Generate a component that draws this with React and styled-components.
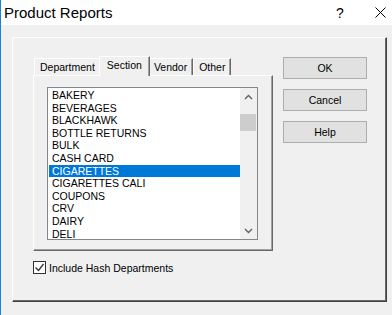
import React from "react";
import styled, { createGlobalStyle } from "styled-components";

const GlobalStyle = createGlobalStyle`
  body {
    margin: 0;
    background: #f0f0f0;
    font-family: "Liberation Sans", Arial, sans-serif;
  }
`;

const Window = styled.div`
  width: 392px;
  height: 315px;
  box-sizing: border-box;
  border-left: 1px solid #1883d7;
  background: #f0f0f0;
  display: flex;
  flex-direction: column;
  overflow: hidden;
`;

const TitleBar = styled.div`
  height: 25px;
  flex: none;
  background: #fff;
  display: flex;
  align-items: center;
  padding-left: 3px;
`;

const Title = styled.div`
  font-size: 15px;
  color: #000;
`;

const TitleButtons = styled.div`
  margin-left: auto;
  display: flex;
  align-items: center;
`;

const HelpGlyph = styled.span`
  font-size: 14px;
  color: #000;
  width: 39px;
  text-align: left;
`;

const CloseGlyph = styled.span`
  width: 17px;
  display: flex;
  justify-content: flex-start;
`;

const Body = styled.div`
  flex: 1;
  padding: 12px 5px 0 11px;
`;

const Panel = styled.div`
  height: 265px;
  box-sizing: border-box;
  border-top: 1px solid #fff;
  border-left: 1px solid #fff;
  border-right: 1px solid #404040;
  border-bottom: 1px solid #404040;
  box-shadow: inset -1px -1px 0 #696969;
  display: flex;
  padding: 18px 19px 0 20px;
`;

const LeftColumn = styled.div`
  width: 240px;
  display: flex;
  flex-direction: column;
`;

const TabStrip = styled.div`
  height: 19px;
  display: flex;
  align-items: flex-end;
  padding-left: 1px;
`;

const Tab = styled.div`
  position: relative;
  box-sizing: border-box;
  height: ${p => (p.$active ? "20px" : "17px")};
  margin: ${p => (p.$active ? "0 -2px -1px" : "0")};
  z-index: ${p => (p.$active ? 1 : 0)};
  padding: ${p => (p.$active ? "0 7px" : "0 5px")};
  background: #f0f0f0;
  border-top: 1px solid #fff;
  border-left: 1px solid #fff;
  border-right: 1px solid #696969;
  box-shadow: inset -1px 0 0 #a0a0a0;
  font-size: 10.5px;
  line-height: ${p => (p.$active ? "17px" : "16px")};
  color: #000;
  white-space: nowrap;
`;

const TabPanel = styled.div`
  height: 176px;
  box-sizing: border-box;
  border-top: 1px solid #fff;
  border-left: 1px solid #fff;
  border-right: 1px solid #696969;
  border-bottom: 1px solid #696969;
  box-shadow: inset -1px -1px 0 #a0a0a0;
  padding: 11px 0 0 13px;
`;

const ListBox = styled.div`
  width: 211px;
  height: 153px;
  box-sizing: border-box;
  border: 1px solid #828790;
  background: #fff;
  display: flex;
`;

const List = styled.div`
  flex: 1;
  padding: 1px 0 0 1px;
  overflow: hidden;
`;

const Item = styled.div`
  height: 12.6px;
  line-height: 12.6px;
  padding-left: 3px;
  font-size: 10.5px;
  color: ${p => (p.$selected ? "#fff" : "#000")};
  background: ${p => (p.$selected ? "#0078d7" : "transparent")};
  white-space: nowrap;
`;

const ScrollBar = styled.div`
  width: 17px;
  background: #f0f0f0;
  display: flex;
  flex-direction: column;
`;

const ScrollArrow = styled.div`
  height: 17px;
  display: flex;
  align-items: center;
  justify-content: center;
`;

const ScrollTrack = styled.div`
  flex: 1;
  padding: 9px 1px 0 0;
`;

const Thumb = styled.div`
  height: 17px;
  background: #cdcdcd;
`;

const CheckRow = styled.label`
  margin-top: 10px;
  display: flex;
  align-items: center;
  gap: 3px;
  font-size: 10.5px;
  color: #000;
`;

const CheckBox = styled.span`
  width: 13px;
  height: 13px;
  box-sizing: border-box;
  border: 1px solid #333;
  background: #fff;
  display: flex;
  align-items: center;
  justify-content: center;
`;

const ButtonColumn = styled.div`
  margin: 1px 0 0 10px;
  display: flex;
  flex-direction: column;
  gap: 10px;
`;

const Button = styled.div`
  width: 84px;
  height: 22px;
  box-sizing: border-box;
  border: 1px solid #adadad;
  background: #e1e1e1;
  font-size: 10.5px;
  color: #000;
  display: flex;
  align-items: center;
  justify-content: center;
`;

const items = [
  "BAKERY",
  "BEVERAGES",
  "BLACKHAWK",
  "BOTTLE RETURNS",
  "BULK",
  "CASH CARD",
  "CIGARETTES",
  "CIGARETTES CALI",
  "COUPONS",
  "CRV",
  "DAIRY",
  "DELI",
];

const tabs = ["Department", "Section", "Vendor", "Other"];

const Chevron = ({ up }) => (
  <svg width="9" height="6" viewBox="0 0 9 6">
    <path
      d={up ? "M1 5 L4.5 1.5 L8 5" : "M1 1 L4.5 4.5 L8 1"}
      fill="none"
      stroke="#606060"
      strokeWidth="1.4"
    />
  </svg>
);

export default function App() {
  return (
    <>
      <GlobalStyle />
      <Window>
        <TitleBar>
          <Title>Product Reports</Title>
          <TitleButtons>
            <HelpGlyph>?</HelpGlyph>
            <CloseGlyph>
              <svg width="11" height="11" viewBox="0 0 11 11">
                <path d="M0.5 0.5 L10.5 10.5 M10.5 0.5 L0.5 10.5" stroke="#000" strokeWidth="1" />
              </svg>
            </CloseGlyph>
          </TitleButtons>
        </TitleBar>
        <Body>
          <Panel>
            <LeftColumn>
              <TabStrip>
                {tabs.map(t => (
                  <Tab key={t} $active={t === "Section"}>{t}</Tab>
                ))}
              </TabStrip>
              <TabPanel>
                <ListBox>
                  <List>
                    {items.map(it => (
                      <Item key={it} $selected={it === "CIGARETTES"}>{it}</Item>
                    ))}
                  </List>
                  <ScrollBar>
                    <ScrollArrow><Chevron up /></ScrollArrow>
                    <ScrollTrack><Thumb /></ScrollTrack>
                    <ScrollArrow><Chevron /></ScrollArrow>
                  </ScrollBar>
                </ListBox>
              </TabPanel>
              <CheckRow>
                <CheckBox>
                  <svg width="11" height="11" viewBox="0 0 11 11">
                    <path d="M1.5 5.5 L4.5 8.5 L9.5 2" fill="none" stroke="#333" strokeWidth="1.3" />
                  </svg>
                </CheckBox>
                Include Hash Departments
              </CheckRow>
            </LeftColumn>
            <ButtonColumn>
              <Button>OK</Button>
              <Button>Cancel</Button>
              <Button>Help</Button>
            </ButtonColumn>
          </Panel>
        </Body>
      </Window>
    </>
  );
}
